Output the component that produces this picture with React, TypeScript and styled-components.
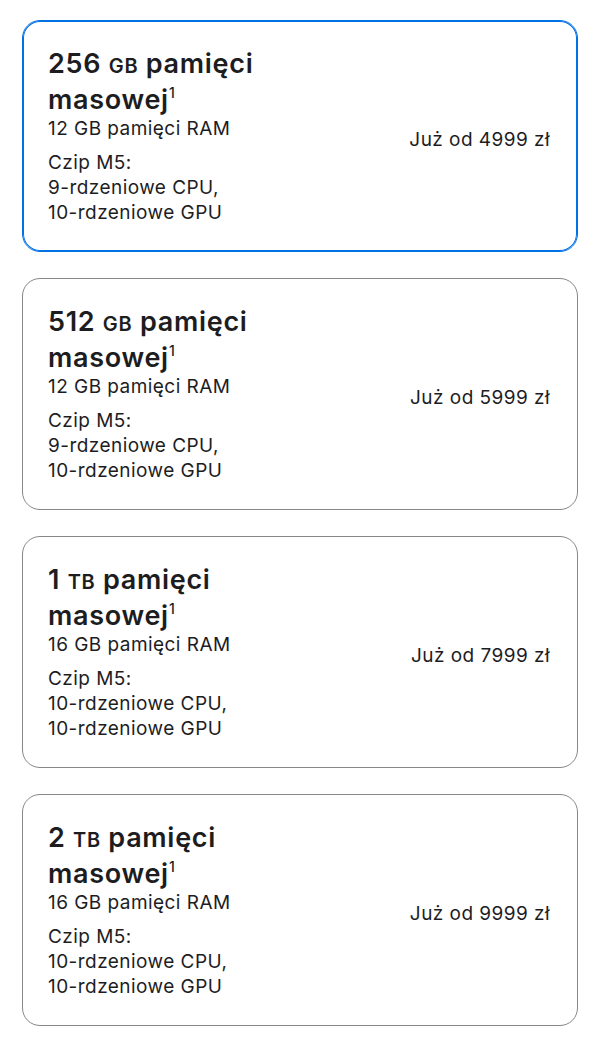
import React from "react";
import styled, { createGlobalStyle } from "styled-components";

const GlobalStyle = createGlobalStyle`
  html, body {
    margin: 0;
    padding: 0;
    background: #ffffff;
  }
  body {
    font-family: Inter, "Noto Sans", "Liberation Sans", sans-serif;
    color: #1d1d1f;
    -webkit-font-smoothing: antialiased;
  }
`;

type Option = {
  size: string;
  unit: string;
  ram: string;
  cpu: string;
  price: string;
  selected?: boolean;
};

const options: Option[] = [
  { size: "256", unit: "GB", ram: "12 GB pamięci RAM", cpu: "9-rdzeniowe CPU,", price: "Już od 4999 zł", selected: true },
  { size: "512", unit: "GB", ram: "12 GB pamięci RAM", cpu: "9-rdzeniowe CPU,", price: "Już od 5999 zł" },
  { size: "1", unit: "TB", ram: "16 GB pamięci RAM", cpu: "10-rdzeniowe CPU,", price: "Już od 7999 zł" },
  { size: "2", unit: "TB", ram: "16 GB pamięci RAM", cpu: "10-rdzeniowe CPU,", price: "Już od 9999 zł" },
];

export default function App() {
  return (
    <>
      <GlobalStyle />
      <List>
        {options.map((o) => (
          <Card key={o.size + o.unit} $selected={o.selected}>
            <Details>
              <Title>
                {o.size} <Unit>{o.unit}</Unit> pamięci masowej<Sup>1</Sup>
              </Title>
              <Spec>{o.ram}</Spec>
              <Chip>
                Czip M5:
                <br />
                {o.cpu}
                <br />
                10-rdzeniowe GPU
              </Chip>
            </Details>
            <Price>{o.price}</Price>
          </Card>
        ))}
      </List>
    </>
  );
}

const List = styled.div`
  display: flex;
  flex-direction: column;
  gap: 26px;
  padding: 20px 20px 20px 22px;
`;

const Card = styled.div<{ $selected?: boolean }>`
  display: flex;
  align-items: center;
  justify-content: space-between;
  min-height: 232px;
  box-sizing: border-box;
  padding: 24px 27px 24px 25px;
  border-radius: 18px;
  border: 1px solid ${(p) => (p.$selected ? "#0071e3" : "#86868b")};
  box-shadow: ${(p) => (p.$selected ? "inset 0 0 0 1px #0071e3" : "none")};
`;

const Details = styled.div`
  display: flex;
  flex-direction: column;
  max-width: 270px;
`;

const Title = styled.div`
  font-size: 27px;
  line-height: 33px;
  font-weight: 600;
  letter-spacing: 0.7px;
`;

const Unit = styled.span`
  font-size: 20px;
`;

const Sup = styled.sup`
  font-size: 14px;
  font-weight: 500;
  letter-spacing: 0;
  vertical-align: 0;
  position: relative;
  top: -11px;
  line-height: 0;
`;

const Spec = styled.div`
  font-size: 19px;
  line-height: 25px;
  letter-spacing: 0.45px;
`;

const Chip = styled(Spec)`
  margin-top: 9px;
`;

const Price = styled.div`
  font-size: 19px;
  line-height: 25px;
  letter-spacing: 0.45px;
  white-space: nowrap;
  padding-top: 6px;
`;
